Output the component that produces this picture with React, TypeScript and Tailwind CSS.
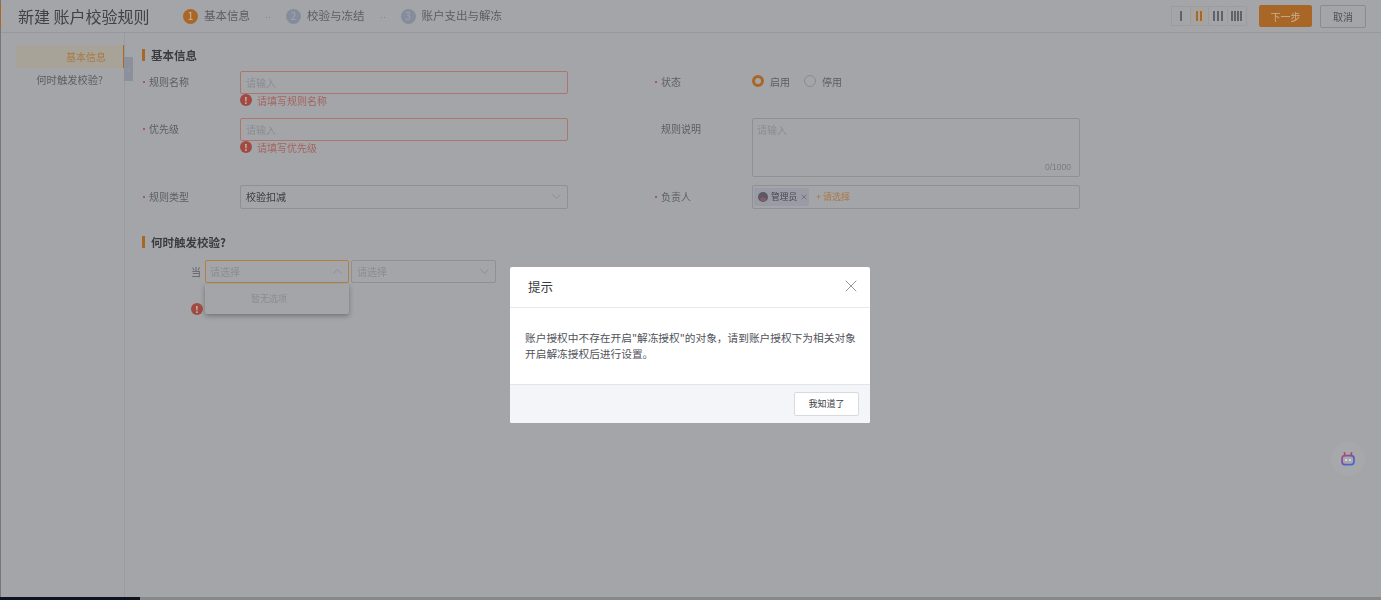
import { ChevronDown, ChevronUp, ChevronLeft, X } from "lucide-react";

const font = { fontFamily: '"Noto Sans CJK SC","Liberation Sans",sans-serif' };

function Step({ n, label, active }: { n: number; label: string; active?: boolean }) {
  return (
    <div className="flex items-center gap-[6px]">
      <span className={`flex h-[15px] w-[15px] items-center justify-center rounded-full text-[10px] leading-none ${active ? "bg-[#a96727] text-[#cdb8a0]" : "bg-[#858c9b] text-[#a3a7af]"}`}>{n}</span>
      <span className="text-[11.5px] text-[#5c5e63]">{label}</span>
    </div>
  );
}

function Dots() {
  return (
    <span className="flex w-[36px] justify-center gap-[2px] pt-[2px]">
      <span className="h-[1px] w-[1px] bg-[#808288]" />
      <span className="h-[1px] w-[1px] bg-[#808288]" />
    </span>
  );
}

function Bars({ count, gap, active }: { count: number; gap: string; active?: boolean }) {
  return (
    <div className={`flex h-full w-[19px] items-center justify-center border-r border-[#9a9ca2] last:border-r-0 ${gap} ${active ? "bg-[#a8a49d]" : ""}`}>
      {Array.from({ length: count }).map((_, i) => (
        <span key={i} className={`h-[10px] w-[2px] ${active ? "bg-[#a96727]" : "bg-[#5f6269]"}`} />
      ))}
    </div>
  );
}

function Label({ text, required }: { text: string; required?: boolean }) {
  return (
    <div className="relative w-[98px] shrink-0 pl-[7px] text-[10px] leading-[21px] text-[#5c5e63]">
      {required && <span className="absolute left-[1px] top-[10px] h-[2px] w-[2px] rounded-full bg-[#a8423e]" />}
      {text}
    </div>
  );
}

function ErrorIcon() {
  return (
    <span className="flex h-[12px] w-[12px] shrink-0 items-center justify-center rounded-full bg-[#a04a42] text-[9px] font-bold leading-none text-[#cfc2c2]">!</span>
  );
}

function TextField({ error }: { error: string }) {
  return (
    <div className="w-[328px]">
      <div className="flex h-[23px] items-center rounded-[2px] border border-[#aa766e] px-[5px] pb-[1px] text-[10px] text-[#8a8c91]">请输入</div>
      <div className="flex h-[12px] items-center gap-[5px] text-[10px] text-[#a36560]">
        <ErrorIcon />
        <span>{error}</span>
      </div>
    </div>
  );
}

function SelectBox({ w, h, text, focus, up, dark }: { w: string; h: string; text: string; focus?: boolean; up?: boolean; dark?: boolean }) {
  return (
    <div className={`flex items-center justify-between rounded-[2px] border pb-[1px] pr-[3px] text-[10px] ${w} ${h} ${focus ? "border-[#b4803f] pl-[4px]" : "border-[#8e9096] pl-[5px]"} ${dark ? "text-[#3a3c41]" : "text-[#8a8c91]"}`}>
      <span>{text}</span>
      {up ? <ChevronUp size={15} strokeWidth={1} className="text-[#808287]" /> : <ChevronDown size={15} strokeWidth={1} className="text-[#808287]" />}
    </div>
  );
}

function SectionTitle({ text }: { text: string }) {
  return (
    <div className="flex items-center gap-[6px] text-[11.5px] font-bold leading-[14px] text-[#3a3c41]">
      <span className="h-[12px] w-[3px] bg-[#a96727]" />
      {text}
    </div>
  );
}

function Robot() {
  return (
    <svg width="14" height="14" viewBox="0 0 16 16" fill="none">
      <defs>
        <linearGradient id="rb" x1="0" y1="0" x2="1" y2="1">
          <stop offset="0" stopColor="#b04f78" />
          <stop offset="0.5" stopColor="#6a50c0" />
          <stop offset="1" stopColor="#3f6ed0" />
        </linearGradient>
      </defs>
      <path d="M4.5 4 L4 1 M11.5 4 L12 1" stroke="#a84f5c" strokeWidth="2" strokeLinecap="round" />
      <rect x="1.2" y="4" width="13.6" height="10.4" rx="3.2" stroke="url(#rb)" strokeWidth="2" />
      <circle cx="5.8" cy="9.2" r="1.2" fill="#e0e0e8" />
      <circle cx="10.2" cy="9.2" r="1.2" fill="#e0e0e8" />
    </svg>
  );
}

function Avatar() {
  return (
    <svg width="10" height="10" viewBox="0 0 10 10" className="shrink-0">
      <circle cx="5" cy="5" r="5" fill="#5a5866" />
      <path d="M2 7 Q5 3 8 7 L7 9 H3 Z" fill="#8a5a60" />
    </svg>
  );
}

export default function App() {
  return (
    <div style={font} className="relative flex h-[600px] w-[1381px] flex-col overflow-hidden bg-[#a4a5a8]">
      <div className="flex flex-1 flex-col blur-[0.6px]">
        {/* header */}
        <header className="flex h-[33px] shrink-0 items-center border-b border-[#98999d] pl-[18px] pr-[15px]">
          <h1 className="w-[165px] shrink-0 text-[16px] font-normal text-[#404247]">新建 账户校验规则</h1>
          <Step n={1} label="基本信息" active />
          <Dots />
          <Step n={2} label="校验与冻结" />
          <Dots />
          <Step n={3} label="账户支出与解冻" />
          <div className="ml-auto flex items-center">
            <div className="flex h-[20px] w-[76px] items-center overflow-hidden rounded-[2px] border border-[#9a9ca2]">
              <Bars count={1} gap="gap-[2px]" />
              <Bars count={2} gap="gap-[2px]" active />
              <Bars count={3} gap="gap-[2px]" />
              <Bars count={4} gap="gap-[1px]" />
            </div>
            <button className="ml-[12px] h-[22px] w-[53px] rounded-[2px] bg-[#a96727] text-[10px] text-[#cdb196]">下一步</button>
            <button className="ml-[8px] h-[23px] w-[46px] rounded-[2px] border border-[#898b91] text-[10px] text-[#4f5156]">取消</button>
          </div>
        </header>

        <div className="flex flex-1">
          {/* sidebar */}
          <aside className="relative w-[125px] shrink-0 border-r border-[#9a9b9f] pl-[16px] pt-[12px] text-[10px]">
            <div className="flex h-[23px] items-center justify-end border-r border-[#a96727] bg-[#a8a398] pr-[17px] text-[#a97844]">基本信息</div>
            <div className="flex h-[23px] items-center justify-end pr-[21px] text-[10.3px] text-[#5c5e63]">何时触发校验?</div>
            <div className="absolute left-[124px] top-[24px] flex h-[24px] w-[9px] items-center justify-center bg-[#8b909a] text-[#a7a9ae]">
              <ChevronLeft size={11} strokeWidth={1} />
            </div>
          </aside>

          {/* main */}
          <main className="flex-1 pl-[17px] pt-[15px]">
            <SectionTitle text="基本信息" />
            <div className="mt-[9px] flex">
              <div className="w-[512px] shrink-0">
                <div className="flex h-[47px]">
                  <Label text="规则名称" required />
                  <TextField error="请填写规则名称" />
                </div>
                <div className="flex h-[67px]">
                  <Label text="优先级" required />
                  <TextField error="请填写优先级" />
                </div>
                <div className="flex pt-[1px]">
                  <Label text="规则类型" required />
                  <SelectBox w="w-[328px]" h="-mt-[1px] h-[24px]" text="校验扣减" dark />
                </div>
              </div>
              <div>
                <div className="flex h-[47px]">
                  <Label text="状态" required />
                  <div className="flex h-[20px] items-center text-[10px] text-[#5c5e63]">
                    <span className="h-[12px] w-[12px] rounded-full border-[3px] border-[#a96727]" />
                    <span className="ml-[6px]">启用</span>
                    <span className="ml-[14px] h-[12px] w-[12px] rounded-full border border-[#898b91]" />
                    <span className="ml-[6px]">停用</span>
                  </div>
                </div>
                <div className="flex h-[67px]">
                  <Label text="规则说明" />
                  <div className="relative h-[59px] w-[328px] rounded-[2px] border border-[#8e9096] px-[4px] py-[3px] text-[10px] text-[#8a8c91]">
                    请输入
                    <span className="absolute bottom-[2px] right-[8px] text-[8.5px] text-[#7a7c81]" style={{ fontFamily: '"Liberation Sans",sans-serif' }}>0/1000</span>
                  </div>
                </div>
                <div className="flex pt-[1px]">
                  <Label text="负责人" required />
                  <div className="-mt-[1px] flex h-[24px] w-[328px] items-center rounded-[2px] border border-[#8e9096] pl-[1px]">
                    <span className="flex h-[18px] w-[55px] items-center gap-[3px] rounded-[2px] bg-[#999ca4] pl-[4px] text-[8.7px] text-[#45474c]">
                      <Avatar />
                      管理员
                      <X size={8} strokeWidth={1.4} className="shrink-0" />
                    </span>
                    <span className="ml-[7px] text-[9px] text-[#a97844]">+ 请选择</span>
                  </div>
                </div>
              </div>
            </div>

            <div className="mt-[26px]">
              <SectionTitle text="何时触发校验?" />
              <div className="relative mt-[11px] flex items-center">
                <span className="ml-[49px] w-[14px] text-[10px] text-[#5c5e63]">当</span>
                <SelectBox w="w-[144px]" h="h-[23px]" text="请选择" focus up />
                <div className="w-[2px]" />
                <SelectBox w="w-[145px]" h="h-[23px]" text="请选择" />
                <div className="absolute left-[63px] top-[24px] flex h-[30px] w-[144px] items-center rounded-[2px] bg-[#a4a5a8] pl-[46px] text-[9px] text-[#8a8c91] shadow-[0_2px_5px_rgba(0,0,0,0.3)]">暂无选项</div>
                <div className="absolute left-[49px] top-[43px]"><ErrorIcon /></div>
              </div>
            </div>
          </main>
        </div>

        <div className="flex h-[3px] shrink-0">
          <div className="w-[140px] bg-[#0d1420]" />
          <div className="flex-1 bg-[#87888a]" />
        </div>
      </div>

      {/* left window edge */}
      <div className="absolute left-0 top-0 h-[597px] w-[1px] bg-[#75777e]" />
      <div className="absolute left-0 top-[3px] h-[25px] w-[1px] bg-[#a96727]" />

      {/* floating assistant */}
      <div className="absolute left-[1331px] top-[442px] flex h-[34px] w-[34px] items-center justify-center rounded-full bg-[#a7a8ac]">
        <Robot />
      </div>

      {/* dialog */}
      <div className="absolute left-[510px] top-[267px] flex h-[156px] w-[360px] flex-col overflow-hidden rounded-[2px] bg-white">
        <div className="flex h-[41px] shrink-0 items-center justify-between border-b border-[#e8e9ec] pl-[18px] pr-[9px]">
          <span className="text-[12.5px] text-[#3a3c41]">提示</span>
          <X size={20} strokeWidth={1.1} className="-mt-[3px] text-[#8b8e96]" />
        </div>
        <div className="flex flex-1 items-center pl-[15px] pr-[10px] text-[10.7px] leading-[16px] text-[#50525a]">
          账户授权中不存在开启"解冻授权"的对象，请到账户授权下为相关对象开启解冻授权后进行设置。
        </div>
        <div className="flex h-[39px] shrink-0 items-center justify-end border-t border-[#e4e5e9] bg-[#f4f5f9] pr-[11px]">
          <button className="h-[24px] w-[65px] rounded-[2px] border border-[#d9dae0] bg-white text-[9px] text-[#3a3c41]">我知道了</button>
        </div>
      </div>
    </div>
  );
}
